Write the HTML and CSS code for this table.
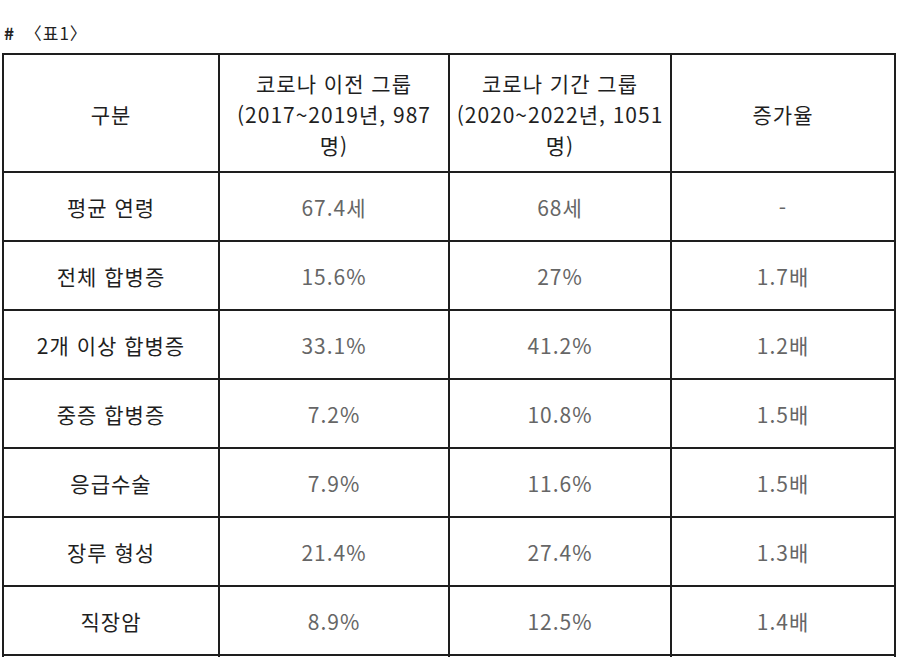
FILE: index.html
```html
<!DOCTYPE html>
<html lang="ko">
<head>
<meta charset="utf-8">
<title>표1</title>
<link rel="stylesheet" href="styles.css">
</head>
<body>
<div class="caption"><span class="hash">#</span> 〈표1〉</div>
<table class="data">
  <colgroup>
    <col class="c1"><col class="c2"><col class="c3"><col class="c4">
  </colgroup>
  <thead>
    <tr>
      <th>구분</th>
      <th>코로나 이전 그룹<br>(2017~2019년, 987<br>명)</th>
      <th>코로나 기간 그룹<br>(2020~2022년, 1051<br>명)</th>
      <th>증가율</th>
    </tr>
  </thead>
  <tbody>
    <tr><th>평균 연령</th><td>67.4세</td><td>68세</td><td>-</td></tr>
    <tr><th>전체 합병증</th><td>15.6%</td><td>27%</td><td>1.7배</td></tr>
    <tr><th>2개 이상 합병증</th><td>33.1%</td><td>41.2%</td><td>1.2배</td></tr>
    <tr><th>중증 합병증</th><td>7.2%</td><td>10.8%</td><td>1.5배</td></tr>
    <tr><th>응급수술</th><td>7.9%</td><td>11.6%</td><td>1.5배</td></tr>
    <tr><th>장루 형성</th><td>21.4%</td><td>27.4%</td><td>1.3배</td></tr>
    <tr><th>직장암</th><td>8.9%</td><td>12.5%</td><td>1.4배</td></tr>
    <tr class="more"><th></th><td></td><td></td><td></td></tr>
  </tbody>
</table>
</body>
</html>
```

FILE: styles.css
```css
html, body {
  margin: 0;
  padding: 0;
  background: #ffffff;
}
body {
  font-family: "Noto Sans CJK KR", "Noto Sans", sans-serif;
  color: #2a2a2a;
}
.caption {
  font-family: "Noto Sans CJK KR", sans-serif;
  font-size: 17px;
  line-height: 20px;
  padding: 23px 0 0 4px;
  height: 30px;
  letter-spacing: 1px;
  color: #222;
}
.caption .hash {
  font-weight: 700;
  margin-right: 4px;
}
.data {
  border-collapse: collapse;
  margin-left: 2px;
  width: 892px;
  table-layout: fixed;
}
.c1 { width: 216px; }
.c2 { width: 230px; }
.c3 { width: 222px; }
.c4 { width: 224px; }
.data th,
.data td {
  border: 2px solid #1e1e1e;
  text-align: center;
  vertical-align: middle;
  padding: 0 2px;
  font-size: 21px;
  letter-spacing: 1px;
  height: 67px;
}
.data thead th {
  height: 114px;
  line-height: 31px;
  font-weight: 400;
  color: #1f1f1f;
  padding-top: 2px;
}
.data tbody th {
  font-weight: 400;
  color: #1f1f1f;
}
.data tbody td {
  font-weight: 400;
  color: #666666;
}
```
